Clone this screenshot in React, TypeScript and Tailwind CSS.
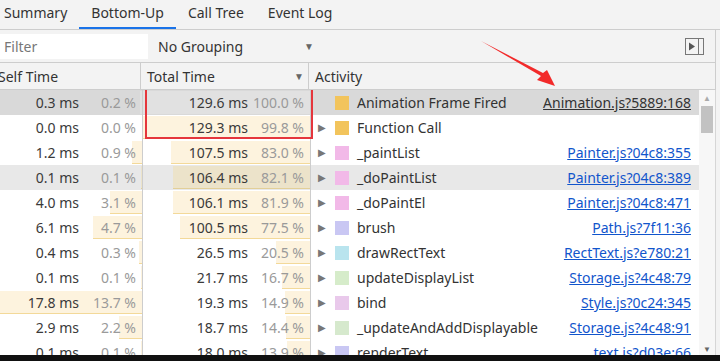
import React from 'react';

type Row = {
  self: number;
  selfPct: string;
  total: number;
  totalPct: string;
  name: string;
  color: string;
  link: string;
  expander: boolean;
  state?: 'selected' | 'hover';
};

const rows: Row[] = [
  { self: 0.3, selfPct: '0.2', total: 129.6, totalPct: '100.0', name: 'Animation Frame Fired', color: '#f2c45c', link: 'Animation.js?5889:168', expander: false, state: 'selected' },
  { self: 0.0, selfPct: '0.0', total: 129.3, totalPct: '99.8', name: 'Function Call', color: '#f2c45c', link: '', expander: true },
  { self: 1.2, selfPct: '0.9', total: 107.5, totalPct: '83.0', name: '_paintList', color: '#f2b9e8', link: 'Painter.js?04c8:355', expander: true },
  { self: 0.1, selfPct: '0.1', total: 106.4, totalPct: '82.1', name: '_doPaintList', color: '#f2b9e8', link: 'Painter.js?04c8:389', expander: true, state: 'hover' },
  { self: 4.0, selfPct: '3.1', total: 106.1, totalPct: '81.9', name: '_doPaintEl', color: '#f2b9e8', link: 'Painter.js?04c8:471', expander: true },
  { self: 6.1, selfPct: '4.7', total: 100.5, totalPct: '77.5', name: 'brush', color: '#c9c7f3', link: 'Path.js?7f11:36', expander: true },
  { self: 0.4, selfPct: '0.3', total: 26.5, totalPct: '20.5', name: 'drawRectText', color: '#b9e4ee', link: 'RectText.js?e780:21', expander: true },
  { self: 0.1, selfPct: '0.1', total: 21.7, totalPct: '16.7', name: 'updateDisplayList', color: '#d6ecca', link: 'Storage.js?4c48:79', expander: true },
  { self: 17.8, selfPct: '13.7', total: 19.3, totalPct: '14.9', name: 'bind', color: '#e9c9eb', link: 'Style.js?0c24:345', expander: true },
  { self: 2.9, selfPct: '2.2', total: 18.7, totalPct: '14.4', name: '_updateAndAddDisplayable', color: '#d6e9cd', link: 'Storage.js?4c48:91', expander: true },
  { self: 0.1, selfPct: '0.1', total: 18.0, totalPct: '13.9', name: 'renderText', color: '#c9c7f3', link: 'text.js?d03e:66', expander: true },
];

const SELF_W = 143;
const TOTAL_W = 167;

function HeatCell({ width, value, pct, barW, state, pctW }: { width: number; value: string; pct: string; barW: number; state?: Row['state']; pctW: number }) {
  const bar =
    state === 'selected'
      ? 'bg-[#e1e1e1]'
      : state === 'hover'
      ? 'bg-[#ece3ca] border-b border-[#e2cf98]'
      : 'bg-[#fdf3de] border-b border-[#f3d999]';
  return (
    <div className="relative h-full shrink-0 flex items-center justify-end pr-[6px]" style={{ width }}>
      {barW > 0 && <div className={`absolute right-0 top-[1px] bottom-[1px] ${bar}`} style={{ width: barW }} />}
      <span className="relative text-[#3a3a3a]">{value} ms</span>
      <span className="relative text-right text-[#9a9a9a]" style={{ width: pctW }}>
        {pct} %
      </span>
    </div>
  );
}

export default function App() {
  return (
    <div
      className="relative w-[720px] h-[361px] overflow-hidden bg-[#f3f3f3] text-[14px] text-[#333] flex flex-col"
      style={{ fontFamily: '"Noto Sans", "Open Sans", sans-serif' }}
    >
      {/* tabs */}
      <div className="h-[30px] shrink-0 flex items-stretch border-b border-[#cdcdcd] ml-[-8px]">
        {['Summary', 'Bottom-Up', 'Call Tree', 'Event Log'].map((t) => (
          <div
            key={t}
            className={`px-[12px] flex items-center pb-[2px] border-b-2 ${t === 'Bottom-Up' ? 'border-[#1a73e8]' : 'border-transparent'}`}
          >
            {t}
          </div>
        ))}
      </div>

      {/* toolbar */}
      <div className="h-[33px] shrink-0 flex items-center border-b border-[#cdcdcd] mr-[4px] border-r">
        <div className="w-[148px] h-[25px] bg-white flex items-center pl-[4px] text-[#777]">Filter</div>
        <div className="w-[168px] pl-[10px] flex items-center justify-between pr-[2px]">
          <span>No Grouping</span>
          <span className="text-[10px] text-[#666]">▼</span>
        </div>
        <div className="flex-1" />
        <svg width="19" height="17" viewBox="0 0 19 17" className="mr-[11px]">
          <rect x="0.5" y="0.5" width="18" height="16" fill="none" stroke="#777" />
          <line x1="13.5" y1="1" x2="13.5" y2="16" stroke="#777" />
          <path d="M4 4.5 L10 8.5 L4 12.5 Z" fill="#555" />
        </svg>
      </div>

      {/* header */}
      <div className="h-[27px] shrink-0 flex items-stretch border-b border-[#cdcdcd] mr-[4px] border-r">
        <div className="w-[143px] shrink-0 flex items-center ml-[-2px] border-r border-[#cdcdcd]">Self Time</div>
        <div className="w-[168px] shrink-0 flex items-center justify-between pl-[6px] pr-[4px] border-r border-[#cdcdcd]">
          <span>Total Time</span>
          <span className="text-[10px] text-[#666]">▼</span>
        </div>
        <div className="flex items-center pl-[6px]">Activity</div>
      </div>

      {/* body */}
      <div className="relative flex-1 min-h-0 flex bg-white mr-[4px] border-r border-[#d6d6d6] overflow-hidden">
        <div className="flex-1 flex flex-col">
          {rows.map((r, i) => {
            const bg = r.state === 'selected' ? 'bg-[#d9d9d9]' : r.state === 'hover' ? 'bg-[#e8e8e8]' : 'bg-white';
            return (
              <div key={i} className={`h-[25px] shrink-0 flex items-center ${bg}`}>
                <div className="h-full shrink-0 border-r border-[#cdcdcd] flex">
                  <HeatCell width={SELF_W - 1} value={r.self.toFixed(1)} pct={r.selfPct} pctW={57} barW={Math.round((r.self / 17.8) * (SELF_W - 1))} state={r.state} />
                </div>
                <div className="h-full shrink-0 border-r border-[#cdcdcd] flex">
                  <HeatCell width={TOTAL_W} value={r.total.toFixed(1)} pct={r.totalPct} pctW={56} barW={Math.round((r.total / 129.6) * TOTAL_W)} state={r.state} />
                </div>
                <div className="flex-1 h-full flex items-center min-w-0">
                  <span className="w-[22px] pl-[7px] text-[10px] text-[#777]">{r.expander ? '▶' : ''}</span>
                  <span className="w-[14px] h-[14px] shrink-0 ml-[2px]" style={{ backgroundColor: r.color }} />
                  <span className="ml-[8px] whitespace-nowrap">{r.name}</span>
                  <span className="flex-1" />
                  {r.link && (
                    <span className={`underline pr-[8px] whitespace-nowrap ${r.state === 'selected' ? 'text-[#333]' : 'text-[#1155cc]'}`}>{r.link}</span>
                  )}
                </div>
              </div>
            );
          })}
        </div>
        {/* scrollbar */}
        <div className="w-[16px] shrink-0 bg-[#f7f7f7] flex flex-col items-center">
          <span className="text-[8px] text-[#aaa] mt-[2px]">▲</span>
          <div className="w-[12px] h-[27px] bg-[#c2c2c2] mt-[2px]" />
          <div className="flex-1" />
          <span className="text-[8px] text-[#666]">▼</span>
        </div>
        {/* highlight box */}
        <div className="absolute left-[145px] top-[-3px] w-[168px] h-[52px] border-2 border-[#e5363c]" />
      </div>

      <div className="h-[6px] shrink-0 bg-[#111]" />

      {/* annotation arrow */}
      <svg className="absolute left-0 top-0 pointer-events-none" width="720" height="361">
        <path d="M481 41 L541 76 L537 80 L555 86 L547 70 L543 73 Z" fill="#f22a2a" />
      </svg>
    </div>
  );
}
